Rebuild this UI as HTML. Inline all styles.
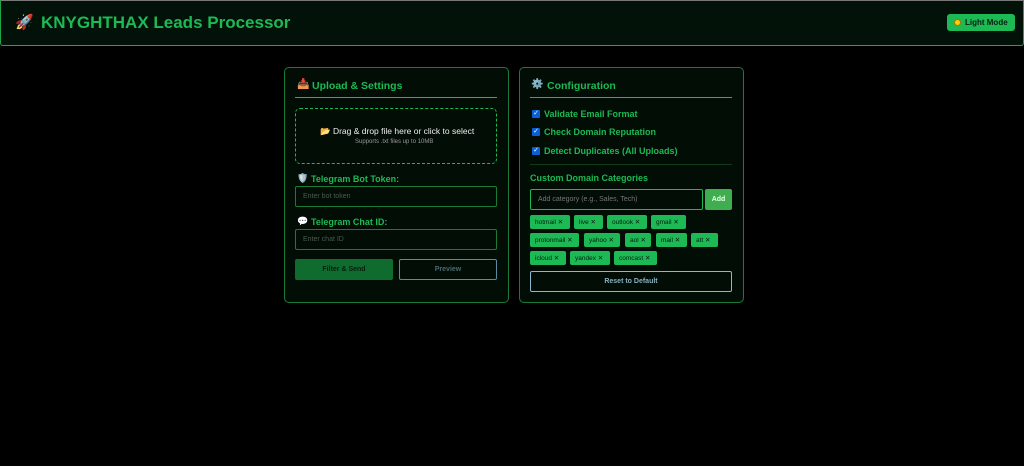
<!DOCTYPE html>
<html><head><meta charset="utf-8"><style>
*{box-sizing:border-box;margin:0;padding:0}
body{width:1024px;height:466px;background:#000;font-family:"Liberation Sans",sans-serif;position:relative;overflow:hidden}
.a{position:absolute}
.hdr{left:0;top:0;width:1024px;height:46px;background:#021208;border-top:1px solid #777;border-bottom:1px solid #1fa84a;border-left:1px solid #1fa84a;border-right:1px solid #1fa84a;border-radius:0 0 3px 3px}
.title{left:41px;top:13px;font-size:17px;font-weight:bold;color:#1db954}
.lm{left:947px;top:14px;width:68px;height:17px;background:#1db954;border-radius:3px;font-size:8px;font-weight:bold;color:#062010;line-height:17px;padding-left:18px}
.lm i{position:absolute;left:7px;top:5px;width:7px;height:7px;border-radius:50%;background:#ffd000;border:1px solid #b07000}
.card{background:#010d05;border:1px solid #1a7a38;border-radius:5px;width:225px;height:236px;top:67px}
.h{font-size:10.5px;font-weight:bold;color:#1db954}
.ul{height:1px;background:#1db954;width:202px}
.lbl{font-size:9px;font-weight:bold;color:#1db954}
.inp{border:1px solid #1a7a38;border-radius:2px;background:#010d05;height:21px;width:202px;font-size:7px;color:#4a5a4e;padding-left:7px;line-height:19px}
.chk{width:8px;height:8px;background:#0b5fd6;border-radius:1px;color:#fff;font-size:7px;line-height:8px;text-align:center}
.ct{font-size:9px;font-weight:bold;color:#1db954}
.tag{height:14px;background:#1db954;border-radius:2px;font-size:6.5px;color:#062010;line-height:15px;padding-left:5px}
</style></head><body>
<div class="a hdr"></div>
<div class="a" style="left:15px;top:13px;font-size:15px">🚀</div>
<div class="a title">KNYGHTHAX Leads Processor</div>
<div class="a lm"><i></i>Light Mode</div>

<div class="a card" style="left:284px"></div>
<div class="a" style="left:297px;top:79px;font-size:10px">📥</div>
<div class="a h" style="left:312px;top:80px">Upload &amp; Settings</div>
<div class="a ul" style="left:295px;top:97px"></div>
<div class="a" style="left:295px;top:108px;width:202px;height:56px;border:1px dashed #1db954;border-radius:5px"></div>
<div class="a" style="left:320px;top:126px;font-size:8.5px;color:#eee">📂 Drag &amp; drop file here or click to select</div>
<div class="a" style="left:355px;top:139px;font-size:6px;color:#999">Supports .txt files up to 10MB</div>
<div class="a" style="left:297px;top:173px;font-size:9px">🛡️</div>
<div class="a lbl" style="left:311px;top:174px">Telegram Bot Token:</div>
<div class="a inp" style="left:295px;top:186px">Enter bot token</div>
<div class="a" style="left:297px;top:216px;font-size:9px">💬</div>
<div class="a lbl" style="left:311px;top:217px">Telegram Chat ID:</div>
<div class="a inp" style="left:295px;top:229px">Enter chat ID</div>
<div class="a" style="left:295px;top:259px;width:98px;height:21px;background:#0f6b2e;border-radius:2px;font-size:7px;font-weight:bold;color:#062010;text-align:center;line-height:21px">Filter &amp; Send</div>
<div class="a" style="left:399px;top:259px;width:98px;height:21px;border:1px solid #5a8ca0;border-radius:2px;font-size:7px;font-weight:bold;color:#4a6a70;text-align:center;line-height:19px">Preview</div>

<div class="a card" style="left:519px"></div>
<div class="a" style="left:531px;top:79px;font-size:10px">⚙️</div>
<div class="a h" style="left:547px;top:80px">Configuration</div>
<div class="a ul" style="left:530px;top:97px"></div>
<div class="a chk" style="left:532px;top:110px">✓</div><div class="a ct" style="left:544px;top:109px">Validate Email Format</div>
<div class="a chk" style="left:532px;top:128px">✓</div><div class="a ct" style="left:544px;top:127px">Check Domain Reputation</div>
<div class="a chk" style="left:532px;top:147px">✓</div><div class="a ct" style="left:544px;top:146px">Detect Duplicates (All Uploads)</div>
<div class="a" style="left:530px;top:164px;width:202px;height:1px;background:#0f3a1c"></div>
<div class="a ct" style="left:530px;top:173px">Custom Domain Categories</div>
<div class="a inp" style="left:530px;top:189px;width:173px;border-color:#1db954;color:#777;font-size:7px;line-height:19px">Add category (e.g., Sales, Tech)</div>
<div class="a" style="left:705px;top:189px;width:27px;height:21px;background:#3fae4f;border-radius:2px;font-size:7px;font-weight:bold;color:#e8ffe8;text-align:center;line-height:21px">Add</div>
<div class="a tag" style="left:530px;top:215px;width:40px">hotmail ✕</div>
<div class="a tag" style="left:574px;top:215px;width:29px">live ✕</div>
<div class="a tag" style="left:607px;top:215px;width:40px">outlook ✕</div>
<div class="a tag" style="left:651px;top:215px;width:35px">gmail ✕</div>
<div class="a tag" style="left:530px;top:233px;width:49px">protonmail ✕</div>
<div class="a tag" style="left:584px;top:233px;width:36px">yahoo ✕</div>
<div class="a tag" style="left:625px;top:233px;width:26px">aol ✕</div>
<div class="a tag" style="left:656px;top:233px;width:31px">mail ✕</div>
<div class="a tag" style="left:691px;top:233px;width:27px">att ✕</div>
<div class="a tag" style="left:530px;top:251px;width:36px">icloud ✕</div>
<div class="a tag" style="left:570px;top:251px;width:40px">yandex ✕</div>
<div class="a tag" style="left:614px;top:251px;width:43px">comcast ✕</div>
<div class="a" style="left:530px;top:271px;width:202px;height:21px;border:1px solid #8ab8d0;border-radius:2px;font-size:7px;font-weight:bold;color:#8ab0c0;text-align:center;line-height:19px">Reset to Default</div>
</body></html>
